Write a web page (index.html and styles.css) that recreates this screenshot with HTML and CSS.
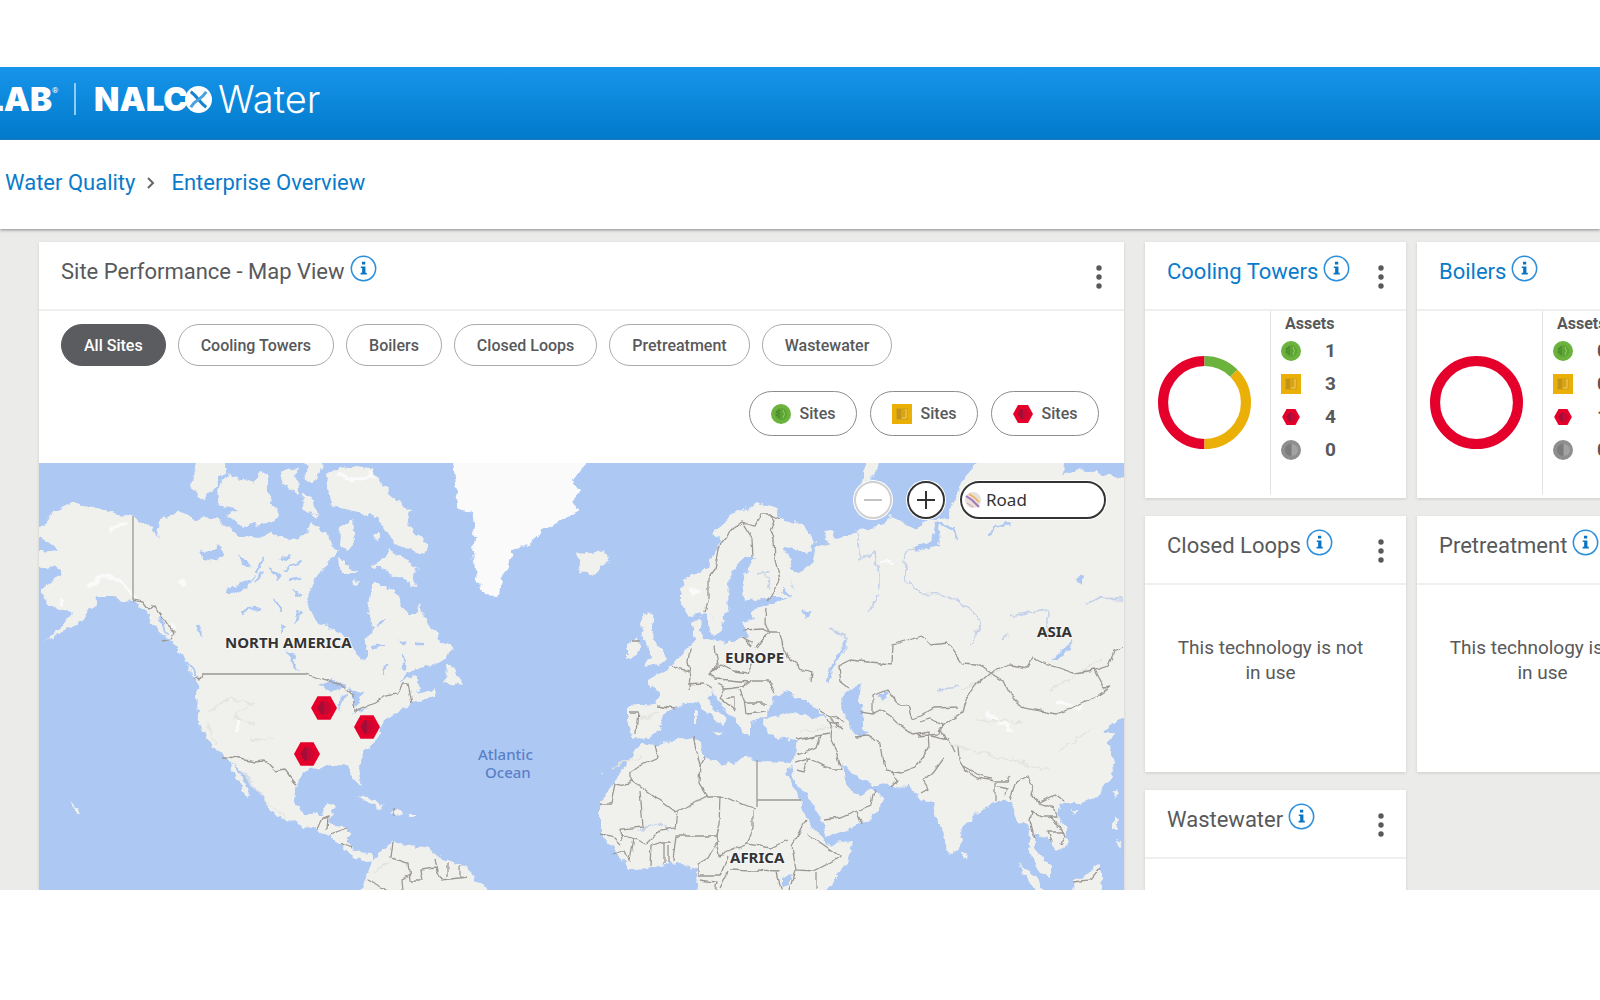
FILE: index.html
```html
<!DOCTYPE html>
<html lang="en">
<head>
<meta charset="utf-8">
<meta name="viewport" content="width=device-width, initial-scale=1">
<title>Enterprise Overview</title>
<link rel="stylesheet" href="styles.css">
</head>
<body>
<svg class="defs" aria-hidden="true">
  <symbol id="info" viewBox="0 0 28 28"><circle cx="14" cy="14" r="12.6" fill="none" stroke="#2b8fdb" stroke-width="1.6"/><path d="M12.4 7h3.4v2.8h-3.4zM11.2 11.8h4.8v6.6h1.4v1.8h-6.4v-1.8h1.6v-4.8h-1.4z" fill="#0a74c4"/></symbol>
  <symbol id="dots" viewBox="0 0 6 24"><circle cx="3" cy="3" r="2.7"/><circle cx="3" cy="12" r="2.7"/><circle cx="3" cy="21" r="2.7"/></symbol>
  <symbol id="good" viewBox="0 0 20 20"><circle cx="10" cy="10" r="10" fill="#6bb33d"/><circle cx="10" cy="10" r="6" fill="#5da336"/><path d="M6 7v6M8 5.500v9" stroke="#3f7d25" stroke-width="1.200" stroke-dasharray="2 1"/><path d="M12 6q3 4 0 8" stroke="#8fd065" fill="none"/></symbol>
  <symbol id="warn" viewBox="0 0 20 20"><path fill="#ebb008" d="M0 0h20v20H0z"/><path fill="#d9a414" d="M4 4h12v12H4z"/><path fill="#c0941c" d="M5 5h4v10H5z"/><path d="M14 5v9h-4" stroke="#f4cf62" fill="none"/></symbol>
  <symbol id="bad" viewBox="0 0 20 18"><path fill="#e4002b" d="M5 0h10l5 9-5 9H5L0 9z"/><path fill="#c80833" d="M8 4h5l3 5-3 5H8L5 9z"/><path fill="#a50d39" d="M8 4h2v10H8L5 9z"/></symbol>
  <symbol id="off" viewBox="0 0 20 20"><circle cx="10" cy="10" r="10" fill="#8e8e8e"/><path d="M10 4a6 6 0 0 0 0 12z" fill="#7c7c7c"/><path d="M11 4a6 6 0 0 1 0 12z" fill="#a2a2a2"/></symbol>
</svg>

<div class="app">
  <header class="brand">
    <span class="ecolab">ECOLAB</span><sup class="reg">®</sup>
    <span class="bar"></span>
    <span class="nalco">NALC<svg class="o" viewBox="0 0 28 28" aria-label="O"><circle cx="14" cy="14" r="14" fill="#fff"/><g fill="none" stroke="#1683cf" stroke-width="3.200"><path d="M6 6q4 3 8 8q4 5 8 8"/><path d="M22 6q-3 5-8 8q-5 3-8 8" stroke="#4aa3e0"/></g></svg></span>
    <span class="water">Water</span>
  </header>
  <nav class="crumbs" aria-label="Breadcrumb">
    <a href="#">Water Quality</a>
    <svg viewBox="0 0 8 12"><path d="M1 1l5 5-5 5" fill="none" stroke="#666" stroke-width="2"/></svg>
    <a href="#">Enterprise Overview</a>
  </nav>

  <main class="board">
    <section class="card map-card">
      <div class="head"><h2>Site Performance - Map View</h2><svg class="info"><use href="#info"/></svg><button class="menu" aria-label="Menu"><svg><use href="#dots"/></svg></button></div>
      <div class="filters">
        <button class="pill on">All Sites</button><button class="pill">Cooling Towers</button><button class="pill">Boilers</button><button class="pill">Closed Loops</button><button class="pill">Pretreatment</button><button class="pill">Wastewater</button>
      </div>
      <div class="states">
        <button class="state"><svg><use href="#good"/></svg>Sites</button><button class="state"><svg><use href="#warn"/></svg>Sites</button><button class="state"><svg><use href="#bad"/></svg>Sites</button>
      </div>
      <div class="map">
        <svg class="world" viewBox="39 463 1085 427" preserveAspectRatio="xMidYMid slice">
          <defs>
            <filter id="coast" filterUnits="userSpaceOnUse" x="39" y="463" width="1085" height="427"><feTurbulence type="fractalNoise" baseFrequency=".11" numOctaves="3" seed="4"/><feDisplacementMap in="SourceGraphic" scale="9" xChannelSelector="R" yChannelSelector="G"/></filter>
            <filter id="wobble" filterUnits="userSpaceOnUse" x="39" y="463" width="1085" height="427"><feTurbulence type="fractalNoise" baseFrequency=".09" numOctaves="2" seed="4"/><feDisplacementMap in="SourceGraphic" scale="6" xChannelSelector="R" yChannelSelector="G"/></filter>
          </defs>
          <path fill="#adc8f3" d="M39 463h1085v427H39z"/>
          <g filter="url(#coast)" fill="#f0f0ed">
            <!-- North and Central America -->
            <path d="M30 530L44 526 55 510 77 502 97 508 133 517 153 527 158 538 160 518 183 512 197 520 217 517 230 530 243 537 260 538 270 532 287 538 303 537 312 522 325 532 337 552 330 562 320 572 310 588 307 602 315 622 333 628 350 642 358 655 363 662 367 655 367 642 373 625 368 612 372 585 387 585 400 598 403 612 413 615 420 605 430 628 452 648 447 658 433 665 412 668 400 683 414 674 420 687 418 694 435 689 434 695 413 704 397 713 383 722 377 740 363 753 357 767 361 787 352 777 347 765 323 767 307 768 297 783 295 800 303 815 320 815 325 805 335 805 332 817 328 825 348 828 348 842 355 852 372 853 373 861 353 858 340 844 330 836 317 830 297 824 268 812 267 800 250 780 234 762 223 757 210 743 198 723 197 683 187 667 182 655 173 642 160 632 147 612 133 602 110 597 97 597 82 622 45 641 73 615 55 608 40 595 42 588 60 575 58 567 30 565 30 553 60 550 50 543 30 535z"/>
            <path d="M229 761l6 2 6 15 9 17-3 2-9-15z"/>
            <path d="M197 455H220L227 470 213 488 202 500 192 488zM217 488L230 473 243 480 253 483 260 473 268 472 268 492 280 517 270 522 247 528 227 517 237 510 220 505zM280 472L297 468 298 495 283 485zM305 455H323L317 480 307 482zM303 492L313 498 317 518 302 508z"/>
            <path d="M327 475L340 467 373 470 382 485 410 512 407 525 430 545 423 555 397 545 377 518 357 512 330 505zM340 527L353 518 355 542 347 550 338 545zM338 558L358 573 340 573zM387 548L417 568 415 585 400 578 370 565 385 558zM373 533h7l-2 9zM448 662L457 672 463 685 443 682zM352 581l6-1-2 6z"/>
            <path d="M355 796l12 1 17 11-5 1-14-9zM387 812l10-3 6 5-8 3zM410 815h6v2h-6zM70 803l8 4 3 6-4-2z"/>
            <!-- South America -->
            <path d="M358 895L367 877 372 860 392 842 430 848 438 857 467 867 477 882 495 895z"/>
            <!-- Iceland, British Isles -->
            <path d="M576 550L583 555 603 550 611 560 593 576 580 572zM642 613L654 614 650 630 660 647 668 658 660 664 643 667 651 654 643 637zM627 643L640 638 638 655 627 659z"/>
            <!-- Europe and Asia -->
            <path d="M680 590L687 577 707 570 720 540 713 532 737 512 763 502 777 508 780 518 800 523 815 540 810 552 783 547 793 567 800 573 813 563 817 547 827 545 825 530 835 532 833 540 860 530 877 528 890 517 917 530 923 522 947 518 953 505 963 478 973 467 987 455H1065L1063 475 1080 470 1134 480V718L1117 720 1105 730 1114 733 1108 743 1117 760 1113 777 1097 797 1080 803 1063 803 1057 813 1068 830 1068 843 1057 852 1047 838 1034 833 1034 847 1050 867 1050 880 1040 872 1029 852 1030 827 1017 823 1010 803 997 800 973 817 962 827 960 847 950 855 940 830 932 803 922 800 910 787 873 785 853 775 843 763 845 780 853 792 863 794 873 788 885 798 870 820 850 828 825 837 823 823 810 800 793 777 791 765 797 740 787 738 770 734 763 723 764 718 793 713 813 717 827 718 818 710 802 697 793 697 787 690 773 697 768 713 762 718 750 721 750 735 742 730 735 717 720 705 713 692 708 698 713 708 727 720 722 726 713 717 697 703 690 705 675 707 662 717 660 730 648 738 632 737 628 720 628 704 657 706 659 693 647 680 663 673 677 660 690 647 695 640 692 623 701 617 703 640 727 643 747 637 742 623 754 620 752 610 770 605 787 598 767 598 744 602 742 577 755 558 744 558 727 583 729 607 720 630 712 635 705 613 690 617 680 603z"/>
            <path d="M712 730l10 1-4 4zM694 711h4l-1 13h-3zM786 740l6-2-3 4zM962 850l5 4-1 8-5-3zM1018 864l12 8 18 22h-10zM1072 882L1084 878 1098 863 1104 877 1100 895H1073zM1117 788l1 6-5 5 1-8zM1113 816l6 4-3 12-3-4zM1072 810h5l-2 5zM862 482l4-19 12-4-4 14-5 10zM1115 838l8 6-3 6zM601 774l3 1-3 1z"/>
            <!-- Africa -->
            <path d="M640 743L655 745 693 737 702 740 703 757 733 765 743 757 757 761 793 762 788 773 800 800 807 820 822 837 825 845 853 842 847 863 823 895H698L697 870 677 862 650 867 630 868 613 850 600 833 600 803 613 783 627 763z"/>
          </g>
          <path filter="url(#coast)" fill="#fafafa" d="M452 455L457 492 460 510 472 512 475 522 473 552 475 572 482 592 498 597 503 578 513 552 533 542 540 532 577 512 572 502 580 490 573 482 585 463V455z"/>
          <!-- snow and relief -->
          <g filter="url(#coast)" fill="none" stroke="#fafafa" stroke-width="4"><path d="M88 586L108 575 124 583 138 600M108 531l18-9M180 582l6 2M170 624l6 4M238 720v12M337 474l16 6 20-6M688 590l12 2M880 562h12M1058 703l24 4M985 712l26 18M62 600v6"/><g stroke="#e3e3e0" stroke-width="1.500"><path d="M208 713l20-14 25 4-18 14 20 8M206 722l10 22M240 770l22 26 24 22M250 739h22M374 872l22-16M950 745l60 14 40 12M975 720l50 2M800 732l40-6M960 690l40-20M1050 690l50-30M1060 750l30-20M640 720l18-8M610 768l30-12"/></g></g>
          <!-- lakes and rivers -->
          <g filter="url(#coast)" fill="#adc8f3">
            <path d="M200 548l14 4 4-8 4 10-6 8-14-2zM226 590l16-8 12-6-6 12-18 8zM240 555l12 12-10-2zM248 530l4-8 12 12zM318 686l14-6 16 8-18 3zM340 692l6 3-8 17zM347 690l17 2-9 14-3-10zM352 714l14-7-4 5zM286 650l6 4 8 16-6-3zM280 622l8 4-4 8zM845 692L860 685 858 700 864 712 862 728 868 734 860 738 848 726 842 706zM877 697l10-6 4 3-8 6zM1052 659L1066 648 1072 637 1071 648 1060 659zM783 586l8 12-8-4zM790 578l6 16-4-8zM802 610l10 4-6 4zM783 877l8-2-2 10-6 4zM1074 578l10-2-3 9zM710 610l5 12-3-8zM330 586l10 8-4-8z"/>
            <g fill="none" stroke="#adc8f3" stroke-width="2.500"><path d="M285 570l18-10M290 580l14-3M292 590l10 6M280 560l10-6M262 558l-6 16M274 600l8 10M240 612l20-5M376 625l10-5M372 647l12-2M400 640l6 4M385 665l-1 12M404 655v14M416 644h8M198 625l4 10M158 615l10 20M186 663l14 15M255 583l8-12M270 570l10 8M300 612l-4 10"/><path stroke-width="6" d="M938 524l-3 20-22 5"/><path d="M940 524l14 4 3 10M990 535l4-8 16-4M847 638l-16 32-4 12"/><path stroke="#c3d0ea" stroke-width="1.500" d="M913 549l-9 4 2 28 16 12 28 3 24 17 6 14-10 18M857 530l4 28 14-6 4 30 0 8M830 629l18 8-5 16M870 612l6-18M1010 616l38-6v30M1085 604l14-6 24 1M938 692l8-4 12-2M762 570l6 12 4 8M640 830l20-8 10 8M1002 640l6-5M758 575l14-4"/></g>
          </g>
          <!-- borders -->
          <g fill="none" stroke="#9b9894" stroke-width="1.300">
            <path d="M133 516V600M202 674H307M757 760V807M757 800h44"/>
            <g filter="url(#wobble)">
            <path d="M133 600L143 602 149 610 155 605 168 625 175 632 172 639 163 641M202 674l-2 6-6-2M307 674L322 680 340 684 353 695 355 711 374 703 385 696 397 694 404 684 408 684 412 703M223 757L240 758 256 761 265 760 275 771 284 769 297 785M317 829L322 818 329 816 328 830M330 834L348 828M340 843L352 848M392 842L390 857 408 862 410 880 422 880 420 870 435 868 442 880 467 877M435 858L438 872M447 862L447 876M460 865V877M402 892L401 880 410 876M367 880L390 892M394 808v8"/>
            <path d="M705 611L709 598 709 576 715 568 721 542 731 530 742 522 752 538 753 557M742 522L755 526 761 514 770 514 775 520 771 530 774 540 775 560 780 580 767 601M770 514l10 5M766 607l-1 15 4 10 12 0M742 630L762 629 769 632 756 648M742 637L753 642M715 645l3 20-9 8 6 6 15 1 20 2M747 640l6 6M781 634l4 16 5 10 10 8 12 4-1 9M690 648l-2 14 3 14-1 14M671 664l8 5 10 2M688 685l14-1 10 4M709 673l12-8 12 6 14 2 5-12M717 685l8 4 18-2 8-6M724 690l-4 8 15 12M727 697h8v12M740 690l4 10 2 14M745 703l22 0M750 681l18 0 6 12M746 714l20-2M657 706l18 3M630 712l8 0-2 22M632 642l8 0"/>
            <path d="M850 660L868 662 892 664 893 645 922 636 930 645 948 643 962 663 976 664 990 673 1010 665 1028 668 1034 658 1048 665 1056 667 1074 673 1095 670 1108 666 1114 652 1124 648M1095 670L1104 687 1110 686 1090 700 1078 706 1056 714 1024 708 1008 692 1002 680 990 673 976 685 966 700 962 712 940 728 946 740M850 660l-12 6 2 16 8 6M873 713V696L888 690 898 703 908 706 912 718 922 715 934 708 958 707M860 712l12 2 8-4 12 8 8 8 14 9 14-3 1 16-14 20-14 5-16-3-4-26-14-8-12 1M920 722l10-3 12 5-2 10-22 2M931 736l18 4 6 12M943 757l-10 14-10 10 5 8-7 4M892 770l6 10-6 8M958 746l1 14 6 10 12 8 18 3 12 0 3-5M963 766l14 8 14 4M996 782l0 18M998 786l10 2-4 8M1010 800l6-18 12-6 5 10-3 8 10 8 16-8 8 6M1040 803l14 6 2 8-14 0-10-6-2 10 4 16M1048 817l14 10 4 10-4 8M1047 832h18M1047 832l4 10M1074 882l16-2 10-12"/>
            <path d="M818 710l18 8 8 4M827 718l4 10-1 10 6 12 6 20-10 0-24-12M797 740l20-4 12-2M797 755l20-7 4-12M794 762l14-4-4 14-8-2M824 820l16-2 17-7 14-6 3-16M857 812l5 13M830 716l6 10 8 2M828 722l10 2"/>
            <path d="M655 745l3 12-14 6-14 10v10l-14 2-4 18-12 0M630 779L675 812 707 796 699 783 700 764 693 737M705 757l-5 10M640 790l3 37-22 2 1 12M678 812l-2 16-16 2-14 14-14-6-12-4M707 796l13 0 36 13M753 810l0 18-6 16M720 796l-1 28-3 12-40 0-3 24M716 836l4 20 8-4 20-8 22 4 18-8M718 840l-10 18-10 6 0 12h22l8-20M650 846l12-4 10 0M652 846l-1 20M664 842v22M668 846v16M634 838l-4 22-6-10-12 4M600 835l12 2 8 8M806 820l-6 12-8 14 4 24 18 1 27-14-20-14-14-9M795 870l-6 20M817 872v18M776 872l4 18M730 870l50 2M700 880l16 2-2 10M728 872l-8 16"/>
            </g>
          </g>
          <g class="place"><text x="225" y="648">NORTH AMERICA</text><text x="725" y="663">EUROPE</text><text x="730" y="863">AFRICA</text><text x="1037" y="637">ASIA</text></g>
          <g class="sea"><text x="478" y="760">Atlantic</text><text x="485" y="778">Ocean</text></g>
          <g><use href="#bad" x="311" y="696" width="26" height="24"/><use href="#bad" x="354" y="715" width="26" height="24"/><use href="#bad" x="294" y="742" width="26" height="24"/></g>
        </svg>
        <div class="controls">
          <button class="zoom" aria-label="Zoom out" disabled><svg viewBox="0 0 18 18"><path d="M0 9h18"/></svg></button>
          <button class="zoom" aria-label="Zoom in"><svg viewBox="0 0 18 18"><path d="M0 9h18M9 0v18"/></svg></button>
          <label class="style"><svg viewBox="0 0 16 16"><circle cx="8" cy="8" r="8" fill="#e6dfdc"/><path d="M1 4l6 4 7 7" stroke="#a276b8" stroke-width="2" fill="none"/><path d="M4 2l5 3 5 5" stroke="#eeb04e" fill="none" stroke-width="1.500"/><path d="M2 11l6 4" stroke="#d39aa4" fill="none"/></svg><select aria-label="Map style"><option>Road</option></select></label>
        </div>
      </div>
    </section>

    <div class="tiles">
      <section class="card">
        <div class="head"><h2><a href="#">Cooling Towers</a></h2><svg class="info"><use href="#info"/></svg><button class="menu" aria-label="Menu"><svg><use href="#dots"/></svg></button></div>
        <div class="body">
          <div class="chart"><svg viewBox="0 0 92 92"><g fill="none" stroke-width="10" transform="rotate(-90 46 46)"><circle cx="46" cy="46" r="41" stroke="#e4002b" pathLength="8" stroke-dasharray="0 4 4"/><circle cx="46" cy="46" r="41" stroke="#ebb008" pathLength="8" stroke-dasharray="0 1 3 4"/><circle cx="46" cy="46" r="41" stroke="#6bb33d" pathLength="8" stroke-dasharray="1 7"/></g></svg></div>
          <div class="assets"><h3>Assets</h3><ul><li><svg><use href="#good"/></svg>1</li><li><svg><use href="#warn"/></svg>3</li><li><svg class="hex"><use href="#bad"/></svg>4</li><li><svg><use href="#off"/></svg>0</li></ul></div>
        </div>
      </section>
      <section class="card">
        <div class="head"><h2><a href="#">Boilers</a></h2><svg class="info"><use href="#info"/></svg><button class="menu" aria-label="Menu"><svg><use href="#dots"/></svg></button></div>
        <div class="body">
          <div class="chart"><svg viewBox="0 0 92 92"><circle cx="46" cy="46" r="41" fill="none" stroke-width="10" stroke="#e4002b"/></svg></div>
          <div class="assets"><h3>Assets</h3><ul><li><svg><use href="#good"/></svg>0</li><li><svg><use href="#warn"/></svg>0</li><li><svg class="hex"><use href="#bad"/></svg>1</li><li><svg><use href="#off"/></svg>0</li></ul></div>
        </div>
      </section>
      <section class="card">
        <div class="head"><h2>Closed Loops</h2><svg class="info"><use href="#info"/></svg><button class="menu" aria-label="Menu"><svg><use href="#dots"/></svg></button></div>
        <p class="unused">This technology is not in use</p>
      </section>
      <section class="card">
        <div class="head"><h2>Pretreatment</h2><svg class="info"><use href="#info"/></svg><button class="menu" aria-label="Menu"><svg><use href="#dots"/></svg></button></div>
        <p class="unused">This technology is not in use</p>
      </section>
      <section class="card">
        <div class="head"><h2>Wastewater</h2><svg class="info"><use href="#info"/></svg><button class="menu" aria-label="Menu"><svg><use href="#dots"/></svg></button></div>
      </section>
    </div>
  </main>
</div>
</body>
</html>
```
FILE: styles.css
```css
* { box-sizing: border-box; }
body { margin: 0; background: #fff; color: #58595b; font-family: Roboto, "Liberation Sans", sans-serif; overflow: hidden; }
button, select { font: inherit; color: inherit; }
h2, h3, p, ul { margin: 0; padding: 0; }
a { color: #0a7bcb; text-decoration: none; }
.defs { display: none; }

.app { height: 100vh; padding: 67px 0 110px; display: flex; flex-direction: column; overflow: hidden; }

.brand { flex: none; height: 73px; padding-bottom: 9px; display: flex; align-items: center; color: #fff; background: linear-gradient(#1795ea, #0079ca); line-height: 40px; }
.ecolab { width: 52px; display: flex; justify-content: flex-end; font: 900 33px/40px Inter, sans-serif; }
.reg { font-size: 8px; line-height: 8px; align-self: flex-start; margin-top: 20px; width: 8px; }
.bar { width: 2px; height: 32px; margin: 0 18px 0 14px; background: #8fcbf4; }
.nalco { display: flex; align-items: center; font: 900 33px/40px Inter, sans-serif; }
.o { width: 27px; height: 27px; margin-left: -3px; }
.water { margin-left: 6px; font: 300 38px/40px Inter, sans-serif; }

.crumbs { flex: none; position: relative; z-index: 1; height: 89px; padding: 0 5px 3px; display: flex; align-items: center; gap: 12px; background: #fff; box-shadow: 0 1px 3px #888; font-size: 22px; line-height: 26px; }
.crumbs svg { width: 8px; height: 12px; margin-right: 4px; }

.board { flex: 1; min-height: 0; overflow: hidden; padding: 13px 0 0 39px; background: #ebebe9; display: grid; grid-template-columns: minmax(0, 1fr) 455px; grid-template-rows: minmax(0, 1fr); gap: 21px; }
.tiles { display: grid; grid-template-columns: 261px 261px; grid-auto-rows: 256px; gap: 18px 11px; }
.card { background: #fff; box-shadow: 0 1px 3px #ccc; }
.head { height: 69px; padding: 0 22px; display: flex; align-items: center; border-bottom: 2px solid #efefef; }
.head h2 { font-size: 22px; line-height: 26px; font-weight: 400; margin-top: -8px; white-space: nowrap; }
.info { flex: none; width: 27px; height: 27px; margin: -14px 0 0 5px; }
.menu { margin: 2px 0 0 auto; padding: 0; border: 0; background: none; display: flex; }
.menu svg { width: 6px; height: 24px; fill: #58595b; }
.map-card { display: flex; flex-direction: column; min-height: 0; }
.map-card .head { flex: none; }

.filters { display: flex; gap: 12px; padding: 13px 22px 0; }
.pill { height: 42px; padding: 0 22px; border: 1px solid #ababab; border-radius: 21px; background: #fff; font-size: 16px; font-weight: 500; white-space: nowrap; }
.pill.on { background: #5b5c60; border-color: #5b5c60; color: #fff; }
.states { display: flex; justify-content: flex-end; gap: 13px; padding: 25px 25px 27px; }
.state { height: 45px; width: 108px; padding: 0; border: 1px solid #8c8c8c; border-radius: 23px; background: #fff; display: flex; align-items: center; justify-content: center; gap: 9px; font-size: 16px; font-weight: 500; }
.state svg { width: 20px; height: 20px; }

.map { flex: 1; min-height: 0; position: relative; }
.world { display: block; width: 100%; height: 100%; }
.place { font: 700 15px "Noto Sans", sans-serif; fill: #333; stroke: #f7f7f7; stroke-width: 2px; paint-order: stroke; }
.sea { font: 500 15px "Noto Sans", sans-serif; fill: #5a7fc8; }
.controls { position: absolute; top: 18px; right: 18px; display: flex; gap: 15px; align-items: center; }
.zoom { width: 38px; height: 38px; padding: 0; border: 2px solid #333; border-radius: 50%; background: #fff; display: grid; place-items: center; box-shadow: 0 0 0 1px #fff; }
.zoom svg { width: 18px; height: 18px; fill: none; stroke: #333; stroke-width: 2; }
.zoom:disabled { border-color: #d0d0d0; }
.zoom:disabled svg { stroke: #c4c4c4; }
.style { width: 146px; height: 38px; padding-left: 3px; border: 2px solid #333; border-radius: 19px; background: #fff; display: flex; align-items: center; gap: 5px; box-shadow: 0 0 0 1px #fff; }
.style svg { flex: none; width: 16px; height: 16px; }
.style select { appearance: none; width: 100%; border: 0; padding: 0; background: none; font: 17px/24px "Noto Sans", sans-serif; color: #333; }

.body { display: grid; grid-template-columns: 126px 1fr; height: 183px; }
.chart { border-right: 1px solid #e2e2e2; display: flex; align-items: center; padding-left: 13px; }
.chart svg { width: 93px; height: 93px; }
.assets { padding: 3px 0 0 10px; }
.assets h3 { padding-left: 4px; font-size: 16px; line-height: 20px; font-weight: 700; }
.assets ul { list-style: none; }
.assets li { display: flex; align-items: center; gap: 24px; height: 33px; font-size: 19px; font-weight: 700; }
.assets svg { width: 20px; height: 20px; }
.assets .hex { height: 16px; }
.unused { padding: 50px 36px 50px 26px; text-align: center; font-size: 19px; line-height: 25px; font-weight: 400; }
```
